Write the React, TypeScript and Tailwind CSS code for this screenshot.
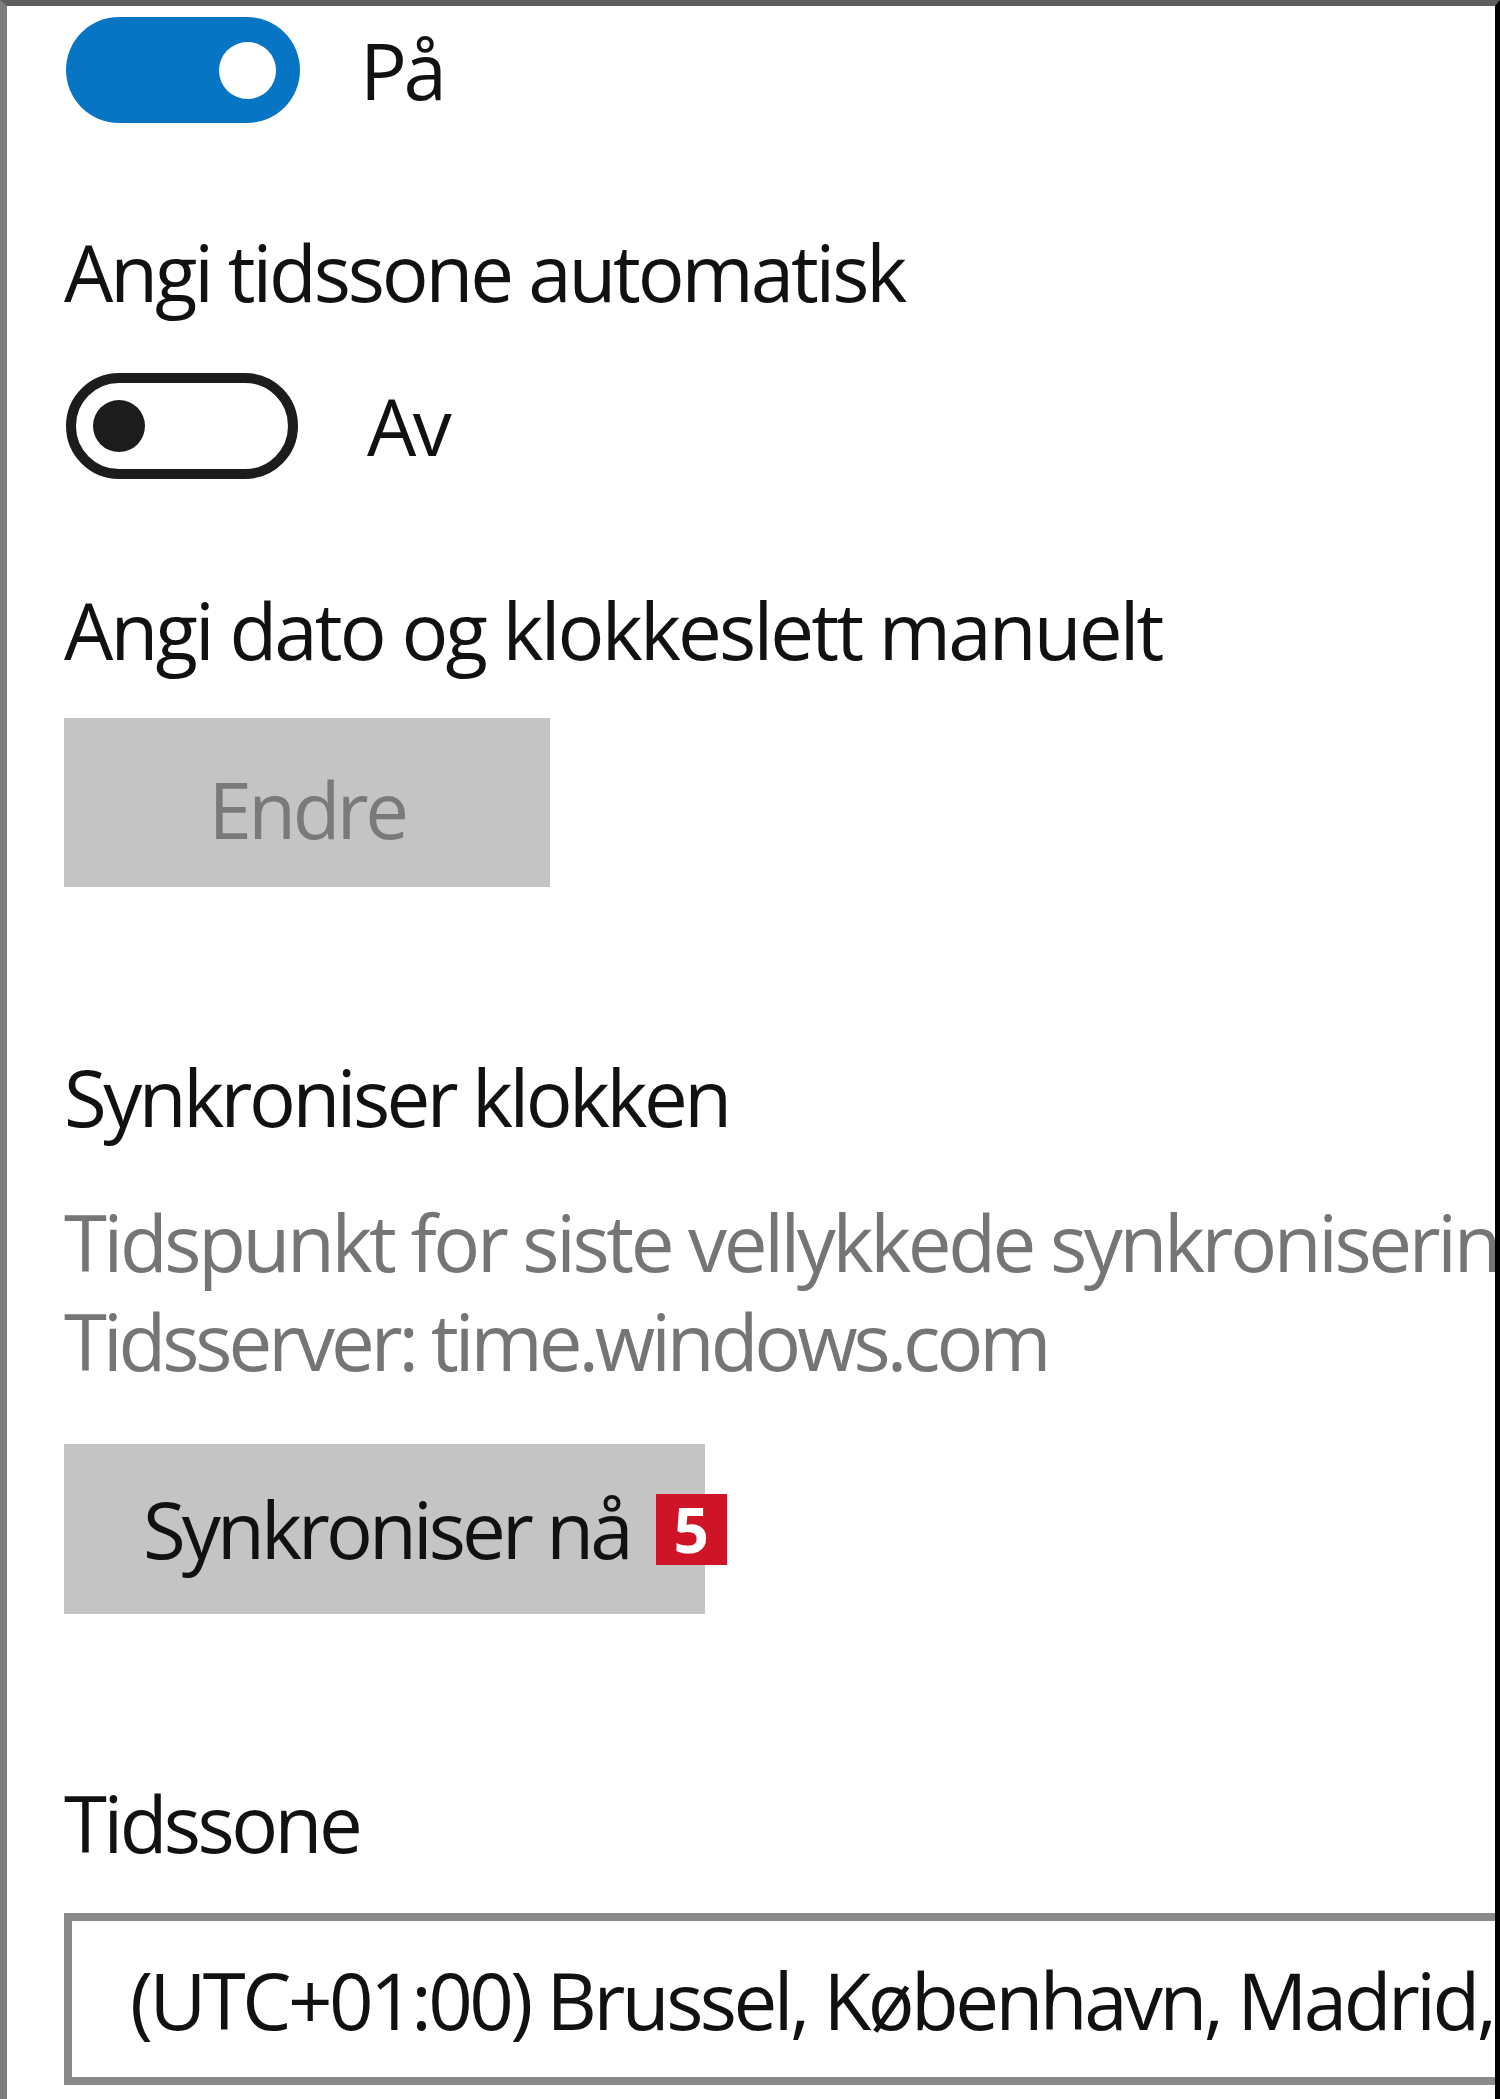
import * as React from 'react';

const ToggleOn: React.FC = () => (
  <div className="flex h-[106px] w-[234px] items-center justify-end rounded-full bg-[#0874c4] pr-[24px]">
    <div className="h-[57px] w-[57px] rounded-full bg-white" />
  </div>
);

const ToggleOff: React.FC = () => (
  <div className="flex h-[106px] w-[232px] items-center rounded-full border-[10px] border-[#1c1c1c] pl-[17px]">
    <div className="h-[52px] w-[52px] rounded-full bg-[#1c1c1c]" />
  </div>
);

export default function App() {
  return (
    <div className="h-[2099px] w-[1500px] overflow-hidden border-t-[6px] border-l-[7px] border-r-[5px] border-t-[#5e5e5e] border-l-[#7d7d7d] border-r-black bg-white font-['Open_Sans',sans-serif] text-[78px] leading-none text-[#111] tracking-[-0.045em]">
      <div className="flex flex-col items-start pl-[57px] pt-[11px]">
        <div className="ml-[2px] flex items-center gap-[60px]">
          <ToggleOn />
          <span>På</span>
        </div>

        <h2 className="mt-[110px] tracking-[-0.04em]">Angi tidssone automatisk</h2>

        <div className="ml-[2px] mt-[62px] flex items-center gap-[69px]">
          <ToggleOff />
          <span>Av</span>
        </div>

        <h2 className="mt-[112px] tracking-[-0.036em]">Angi dato og klokkeslett manuelt</h2>

        <button className="mt-[49px] flex h-[169px] w-[486px] items-start justify-center bg-[#c4c4c4] pt-[52px] text-[#7a7a7a]">
          Endre
        </button>

        <h2 className="mt-[171px]">Synkroniser klokken</h2>
        <p className="mt-[67px] whitespace-nowrap text-[#757575] tracking-[-0.043em]">
          Tidspunkt for siste vellykkede synkronisering: 12.11.2015 10:41:27
        </p>
        <p className="mt-[21px] whitespace-nowrap text-[#757575] tracking-[-0.052em]">
          Tidsserver: time.windows.com
        </p>

        <button className="mt-[64px] flex h-[170px] w-[641px] items-center bg-[#c4c4c4] pl-[79px] text-[#111]">
          <span className="whitespace-nowrap tracking-[-0.05em]">Synkroniser nå</span>
          <span className="ml-[26px] flex h-[71px] w-[71px] shrink-0 items-center justify-center bg-[#cf1427] text-[62px] font-bold tracking-normal text-white">
            5
          </span>
        </button>

        <h2 className="mt-[170px]">Tidssone</h2>

        <div className="mt-[51px] h-[172px] w-[1480px] shrink-0 border-[8px] border-[#8a8a8a] pl-[58px] pt-[40px]">
          <span className="whitespace-nowrap text-[#111]">(UTC+01:00) Brussel, København, Madrid, Paris</span>
        </div>
      </div>
    </div>
  );
}
